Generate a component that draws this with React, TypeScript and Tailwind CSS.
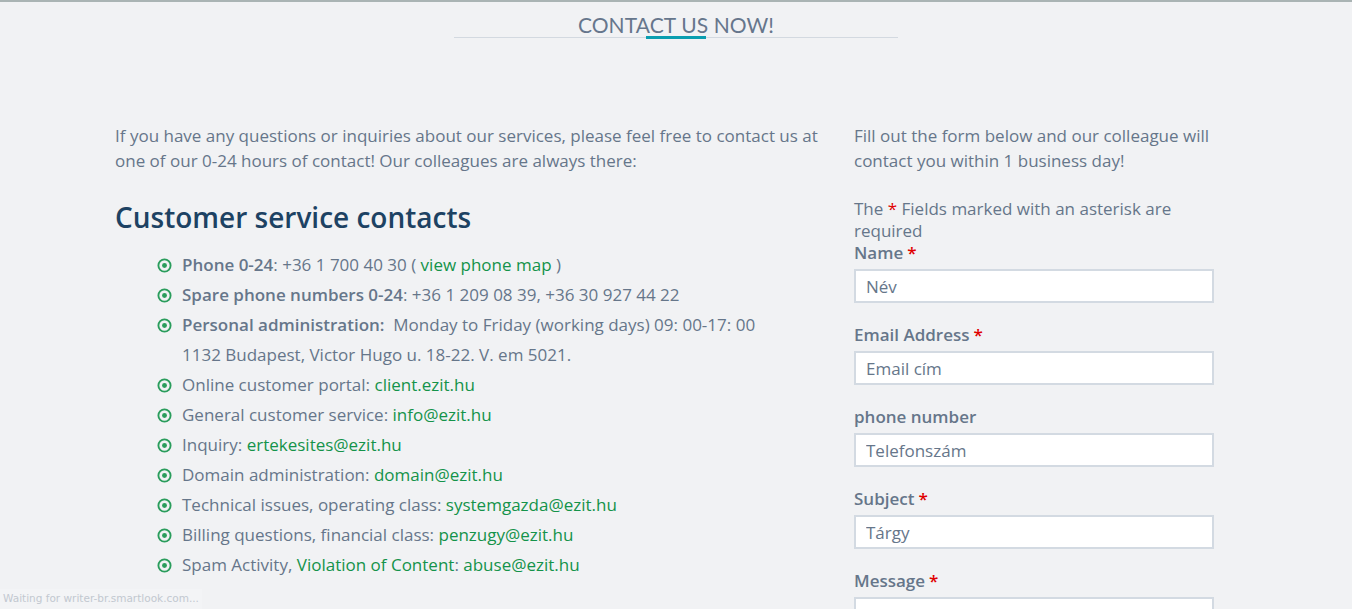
import { useState } from "react"

type Contact = {
  label: string
  link: string
}

const green = "text-[#14934a]"

function Bullet() {
  return (
    <svg viewBox="0 0 16 16" className="mt-[8px] h-[15px] w-[15px] shrink-0">
      <circle cx="8" cy="8" r="6.5" fill="none" stroke="#2a9d5c" strokeWidth="2" />
      <circle cx="8" cy="8" r="2.6" fill="#2a9d5c" />
    </svg>
  )
}

function Field({ label, placeholder, required }: { label: string; placeholder: string; required?: boolean }) {
  const [value, setValue] = useState("")
  return (
    <div className="mb-[21px]">
      <label className="block h-[22px] font-semibold leading-[22px]">
        {label}
        {required && <span className="ml-[4px] text-[#e00000]">*</span>}
      </label>
      <input
        value={value}
        onChange={(e) => setValue(e.target.value)}
        placeholder={placeholder}
        className="mt-[5px] h-[34px] w-[360px] border-2 border-[#d3dae2] bg-white px-[10px] text-[17px] text-[#66768a] outline-none placeholder:text-[#66768a]"
      />
    </div>
  )
}

export default function App() {
  const items: Contact[] = [
    { label: "Online customer portal:", link: "client.ezit.hu" },
    { label: "General customer service:", link: "info@ezit.hu" },
    { label: "Inquiry:", link: "ertekesites@ezit.hu" },
    { label: "Domain administration:", link: "domain@ezit.hu" },
    { label: "Technical issues, operating class:", link: "systemgazda@ezit.hu" },
    { label: "Billing questions, financial class:", link: "penzugy@ezit.hu" },
  ]

  return (
    <div className="relative h-[609px] overflow-hidden border-t-2 border-[#aab4b4] bg-[#f1f2f4] font-['Open_Sans',sans-serif] text-[17px] text-[#66768a]">
      {/* title */}
      <div className="flex justify-center pt-[11px]">
        <div className="relative w-[444px] border-b border-[#d3d9e0] text-center">
          <h2 className="font-['Lato',sans-serif] text-[21px] leading-[24px] tracking-[0.1px] text-[#66768c]">CONTACT US NOW!</h2>
          <div className="mx-auto mb-[-2px] mt-[-1px] h-[3px] w-[60px] bg-[#0a9eb0]" />
        </div>
      </div>

      <div className="flex pl-[115px] pt-[85px]">
        {/* left column */}
        <div className="w-[739px]">
          <p className="w-[705px] leading-[25px]">
            If you have any questions or inquiries about our services, please feel free to contact us at one of our 0-24
            hours of contact! Our colleagues are always there:
          </p>
          <h3 className="mt-[26px] text-[28px] font-semibold leading-[36px] text-[#1d4263]">Customer service contacts</h3>
          <ul className="ml-[42px] mt-[15px] leading-[30px]">
            <li className="flex gap-[10px]">
              <Bullet />
              <span>
                <b className="font-semibold">Phone 0-24</b>: +36 1 700 40 30 ( <a className={green}>view phone map</a> )
              </span>
            </li>
            <li className="flex gap-[10px]">
              <Bullet />
              <span>
                <b className="font-semibold">Spare phone numbers 0-24</b>: +36 1 209 08 39, +36 30 927 44 22
              </span>
            </li>
            <li className="flex gap-[10px]">
              <Bullet />
              <span>
                <b className="font-semibold">Personal administration:</b>&nbsp; Monday to Friday (working days) 09: 00-17: 00
                <br />
                1132 Budapest, Victor Hugo u. 18-22. V. em 5021.
              </span>
            </li>
            {items.map((it) => (
              <li key={it.label} className="flex gap-[10px]">
                <Bullet />
                <span>
                  {it.label} <a className={green}>{it.link}</a>
                </span>
              </li>
            ))}
            <li className="flex gap-[10px]">
              <Bullet />
              <span>
                Spam Activity, <span className={green}>Violation of Content</span>: <a className={green}>abuse@ezit.hu</a>
              </span>
            </li>
          </ul>
        </div>

        {/* right column: form */}
        <div className="w-[365px]">
          <p className="leading-[25px]">Fill out the form below and our colleague will contact you within 1 business day!</p>
          <p className="mt-[25px] leading-[22px]">
            The <span className="text-[#e00000]">*</span> Fields marked with an asterisk are required
          </p>
          <Field label="Name" placeholder="Név" required />
          <Field label="Email Address" placeholder="Email cím" required />
          <Field label="phone number" placeholder="Telefonszám" />
          <Field label="Subject" placeholder="Tárgy" required />
          <Field label="Message" placeholder="" required />
        </div>
      </div>

      {/* browser status bubble */}
      <div className="absolute bottom-0 left-0 bg-[#f3f4f6] px-[3px] py-[2px] font-['DejaVu_Sans',sans-serif] text-[10.5px] text-[#c2c8d0]">
        Waiting for writer-br.smartlook.com...
      </div>
    </div>
  )
}
